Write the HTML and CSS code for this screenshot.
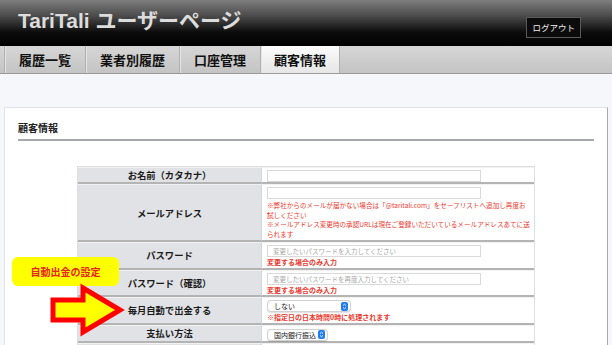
FILE: index.html
```html
<!DOCTYPE html>
<html lang="ja">
<head>
<meta charset="utf-8">
<title>TariTali ユーザーページ</title>
<link rel="stylesheet" href="styles.css">
</head>
<body>
<header class="hd">
  <h1 class="logo">TariTali ユーザーページ</h1>
  <a class="logout">ログアウト</a>
</header>
<nav class="tabs">
  <a class="tab">履歴一覧</a>
  <a class="tab">業者別履歴</a>
  <a class="tab">口座管理</a>
  <a class="tab active">顧客情報</a>
</nav>
<main class="main">
  <section class="panel">
    <h2 class="ttl">顧客情報</h2>
    <table class="form">
      <tr class="r1">
        <th>お名前（カタカナ）</th>
        <td><input class="inp" type="text"></td>
      </tr>
      <tr class="r2">
        <th>メールアドレス</th>
        <td><input class="inp" type="text">
          <p class="note">※弊社からのメールが届かない場合は「@taritali.com」をセーフリストへ追加し再度お試しください</p>
          <p class="note">※メールアドレス変更時の承認URLは現在ご登録いただいているメールアドレスあてに送られます</p>
        </td>
      </tr>
      <tr class="r3">
        <th>パスワード</th>
        <td><input class="inp" type="text" placeholder="変更したいパスワードを入力してください">
          <p class="note b">変更する場合のみ入力</p></td>
      </tr>
      <tr class="r3">
        <th>パスワード（確認）</th>
        <td><input class="inp" type="text" placeholder="変更したいパスワードを再度入力してください">
          <p class="note b">変更する場合のみ入力</p></td>
      </tr>
      <tr class="r3">
        <th>毎月自動で出金する</th>
        <td><div class="sel w1"><span>しない</span><svg class="ud" width="7" height="9" viewBox="0 0 7 9"><rect width="7" height="9" rx="2" fill="#1f7cf2"/><path d="M2 3.6 L3.5 2.2 L5 3.6 M2 5.4 L3.5 6.8 L5 5.4" fill="none" stroke="#fff" stroke-width="0.9"/></svg></div>
          <p class="note b">※指定日の日本時間0時に処理されます</p></td>
      </tr>
      <tr class="r6">
        <th>支払い方法</th>
        <td><div class="sel w2"><span>国内銀行振込</span><svg class="ud" width="7" height="9" viewBox="0 0 7 9"><rect width="7" height="9" rx="2" fill="#1f7cf2"/><path d="M2 3.6 L3.5 2.2 L5 3.6 M2 5.4 L3.5 6.8 L5 5.4" fill="none" stroke="#fff" stroke-width="0.9"/></svg></div></td>
      </tr>
      <tr class="r7">
        <th></th>
        <td><p class="bank">【振込先銀行口座情報】</p></td>
      </tr>
    </table>
  </section>
</main>
<div class="callout">自動出金の設定</div>
<svg class="arrow" width="612" height="345" viewBox="0 0 612 345">
  <polygon points="53,300 83,300 83,288 120,310 83,332 83,320 53,320" fill="#ffff00" stroke="#ff0000" stroke-width="5" stroke-linejoin="miter"/>
</svg>
</body>
</html>
```
FILE: styles.css
```css
* { box-sizing: border-box; }
html, body { margin: 0; padding: 0; }
body {
  width: 612px;
  height: 345px;
  overflow: hidden;
  position: relative;
  background: #f6f7fb;
  font-family: "Noto Sans CJK JP", "Liberation Sans", sans-serif;
  color: #222;
}
.hd {
  height: 46px;
  display: flex;
  align-items: center;
  justify-content: space-between;
  padding: 0 31px 0 18px;
  background: linear-gradient(to bottom, #7e7e7e 0%, #4a4a4a 35%, #0c0c0c 70%, #000 100%);
}
.logo {
  margin: -4px 0 0 0;
  font-family: "Liberation Sans", "Noto Sans CJK JP", sans-serif;
  font-weight: bold;
  font-size: 21px;
  line-height: 24px;
  color: #dcdcdc;
}
.logout {
  margin-top: 8px;
  height: 21px;
  line-height: 19px;
  padding: 0 5px;
  font-size: 8.5px;
  color: #eee;
  background: #0b0b0b;
  border: 1px solid #5a5a5a;
}
.tabs {
  height: 28px;
  display: flex;
  padding-left: 4px;
  background: linear-gradient(to bottom, #d6d6d6, #c4c4c4);
  border-bottom: 1px solid #9a9a9a;
}
.tab {
  padding: 0 14px;
  line-height: 27px;
  font-size: 13px;
  font-weight: bold;
  color: #111;
  border-left: 1px solid #b0b0b0;
  box-shadow: inset 1px 0 0 #e4e4e4;
}
.tab.active {
  background: linear-gradient(to bottom, #fbfbfb, #e6e6e6);
  border-right: 1px solid #b0b0b0;
  padding: 0 13px;
}
.main {
  padding: 33px 4px 0 4px;
}
.panel {
  background: #fff;
  border-top: 1px solid #e2e3e8;
  border-left: 1px solid #e2e3e8;
  border-right: 1px solid #a9a9ad;
  padding: 13px 13px 40px 13px;
}
.ttl {
  margin: 0;
  font-size: 10px;
  line-height: 14px;
  font-weight: bold;
  padding-bottom: 4px;
  border-bottom: 2px solid #a6a9af;
}
.form {
  width: 458px;
  margin: 25px auto 0;
  border-collapse: separate;
  border-spacing: 0;
  border: 1px solid #dedede;
}
.form th, .form td {
  padding: 0;
  border-bottom: 2px solid #b4b4b4;
  border-top: 1px solid #f2f2f2;
}
.form th {
  width: 183px;
  background: #e1e2e6;
  font-size: 9.3px;
  font-weight: bold;
  text-align: center;
  vertical-align: middle;
  color: #1a1a1a;
}
.form td {
  background: #fff;
  border-left: 1px solid #d6d6d6;
  padding: 2px 4px 0 5px;
  vertical-align: top;
}
.r1 th, .r1 td { height: 16px; }
.r2 th, .r2 td { height: 58px; }
.r3 th, .r3 td { height: 26px; }
.r6 th, .r6 td { height: 15px; }
.r7 th, .r7 td { height: 20px; }
.inp {
  display: block;
  width: 214px;
  height: 12px;
  border: 1px solid #d9d9d9;
  padding: 0 5px;
  font-family: "Noto Sans CJK JP", sans-serif;
  font-size: 6.5px;
  color: #333;
  background: #fff;
  outline: none;
}
.inp::placeholder { color: #a8a8a8; }
.note {
  margin: 0;
  color: #ec3a2e;
  font-size: 6.6px;
  line-height: 9.5px;
}
.note.b {
  font-weight: bold;
  margin-top: 1px;
  font-size: 7px;
}
.r2 .note:first-of-type { margin-top: 2px; }
.sel {
  display: flex;
  align-items: center;
  justify-content: space-between;
  height: 12px;
  border: 1px solid #d2d2d2;
  border-radius: 4px;
  background: #fff;
  padding: 0 2px 0 6px;
  font-size: 7px;
  color: #222;
  box-shadow: 0 0.5px 1px rgba(0,0,0,0.12);
}
.sel.w1 { width: 84px; }
.sel.w2 { width: 61px; margin-top: 1px; }
.ud { display: block; }
.bank {
  margin: 0;
  font-size: 8px;
  font-weight: bold;
  line-height: 10px;
}
.callout {
  position: absolute;
  left: 12px;
  top: 257px;
  width: 107px;
  height: 29px;
  border-radius: 6px;
  background: #ffff00;
  color: #e8231b;
  font-weight: bold;
  font-size: 10px;
  line-height: 29px;
  text-align: center;
}
.arrow {
  position: absolute;
  left: 0;
  top: 0;
  pointer-events: none;
}
```
